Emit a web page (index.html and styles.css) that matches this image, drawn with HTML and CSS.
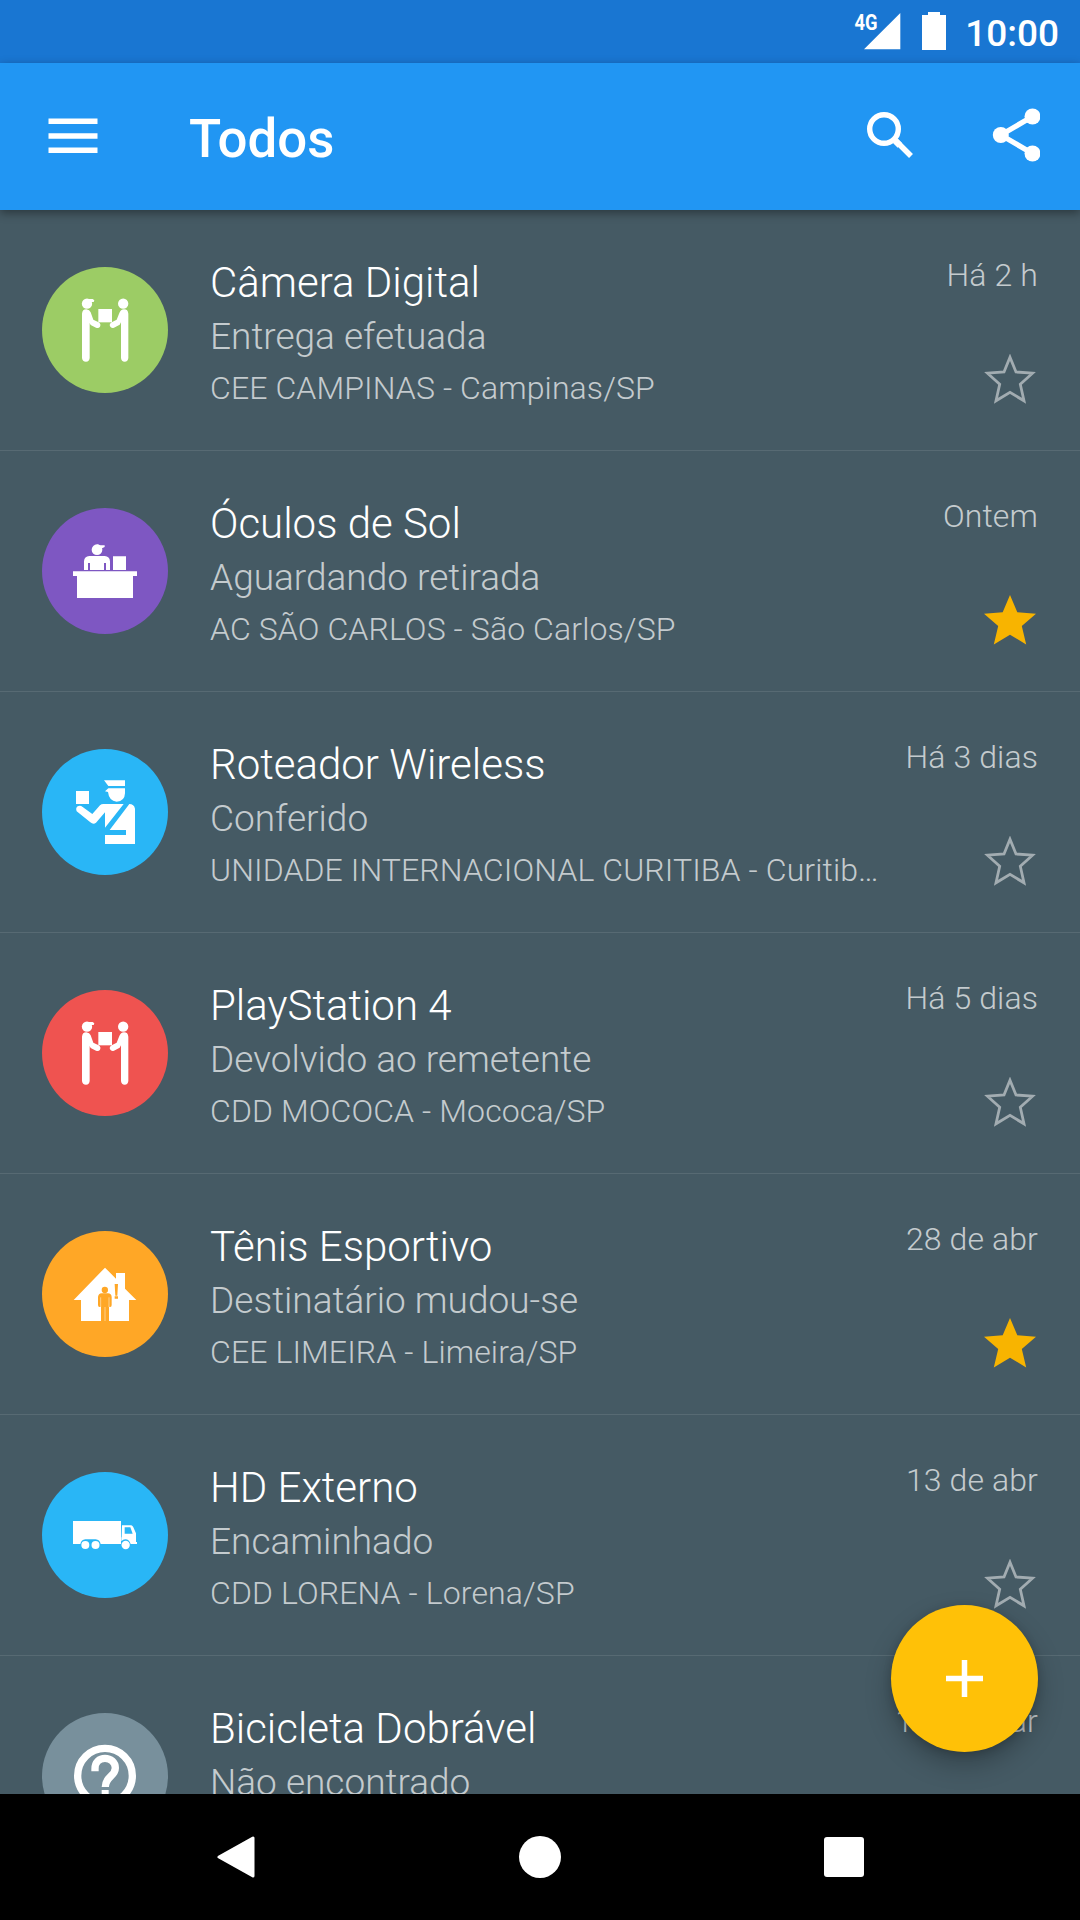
FILE: index.html
```html
<!DOCTYPE html>
<html lang="pt-BR">
<head>
<meta charset="utf-8">
<title>Todos</title>
<link rel="stylesheet" href="styles.css">
</head>
<body>
<svg class="defs" aria-hidden="true">
  <defs>
    <symbol id="handover" viewBox="36 51 378 378">
      <circle cx="171" cy="161" r="15.5"/>
      <path d="M171 147h17l5 4-2 5h-8z"/>
      <rect x="205" y="177" width="41" height="40"/>
      <circle cx="279.500" cy="161" r="15.500"/>
      <path d="M156 191Q157 178 169 178Q179 179 182 187L190 209L206 217Q214 222 210 230Q206 236 198 233L182 225L179 219V324Q178 335 168 335Q157 335 156 324Z"/>
      <path d="M295 191Q294 178 282 178Q272 179 268 189L260 209L245 217Q237 222 240 229Q244 236 252 233L269 224L273 217V324Q274 335 284 335Q294 335 295 324Z"/>
    </symbol>
    <symbol id="counter" viewBox="36 54 378 378">
      <circle cx="201" cy="179" r="16"/>
      <path d="M201 163L210 166H224V171L216 175L214 180Z"/>
      <path d="M162 240V214Q163 199 178 198H224Q239 199 240 214V240H228V219H222V240H180V219H174V240Z"/>
      <path d="M249 199H288V240H249ZM129 244H321V258H309V324H141V258H129Z"/>
    </symbol>
    <symbol id="officer" viewBox="36 57 378 378">
      <path d="M222 151H285V168H235ZM225 184L235 175H285V190Q284 214 260 215Q237 213 234 186ZM138 183H177V222H138Z"/>
      <path d="M140 244Q136 234 143 229Q151 225 158 231L187 252L210 226Q214 222 220 222H281L225 293V247L198 278Q190 285 181 277Z"/>
      <path d="M298 222Q312 222 315 236V342H225V315H288V300H239Z"/>
    </symbol>
    <symbol id="house" viewBox="36 63 378 378">
      <path d="M225 173L258 206V189H285V236L319 270H297V333H237V290Q245 293 245 285V261Q244 250 234 250H215Q205 251 204 261V285Q204 293 213 290V333H153V270H131Z"/>
      <circle class="house-cut" cx="224.500" cy="240" r="9.500"/>
      <path class="house-cut" d="M254 222H264L262 257H256ZM254 259H264V266H254Z"/>
      <path class="house-line" d="M212 262V291M237 262V291M225 291V333"/>
    </symbol>
    <symbol id="truck" viewBox="36 66 378 378">
      <path d="M129 213H273V282H212Q209 269 197 268H166Q154 269 151 282H129Z"/>
      <path fill-rule="evenodd" d="M276 226H304Q308 227 310 232L318 250V276H321V282H302Q298 268 286 268Q279 268 274 274V262H275ZM284 232V251H308L301 232Z"/>
      <circle cx="166" cy="285" r="12"/><circle cx="196.500" cy="285" r="12"/><circle cx="287" cy="285" r="12.500"/>
    </symbol>
    <symbol id="question" viewBox="36 69 378 378">
      <circle class="ring" cx="225" cy="257" r="82"/>
      <path class="ring" d="M195 244V236C195 216 208 205 225 205S256 217 256 234C256 260 226 258 226 291"/>
      <path d="M215 300H236V322H215Z"/>
    </symbol>
    <symbol id="star" viewBox="0 0 52 50">
      <path d="M26 0L33.300 17.300L52 18.700L37.800 31L42.200 49.500L26 39.700L9.800 49.500L14.200 31L0 18.700L18.700 17.300Z"/>
    </symbol>
    <symbol id="star-outline" viewBox="0 0 52 50">
      <path class="outline" d="M26 3.200L32 18L48.500 19.200L36.300 30.200L40 46.800L26 38.400L12 46.800L15.700 30.200L3.500 19.200L20 18Z"/>
    </symbol>
  </defs>
</svg>

<div class="screen">
  <header class="status">
    <svg class="signal" width="47" height="40" viewBox="854 11 47 40">
      <text class="network" x="854.500" y="29.500" textLength="23" lengthAdjust="spacingAndGlyphs">4G</text>
      <path d="M900.300 13V49.300H864Z"/>
    </svg>
    <svg class="battery" width="24" height="38" viewBox="0 0 24 38"><path d="M6 0H18V3H24V38H0V3H6Z"/></svg>
    <span class="clock">10:00</span>
  </header>

  <div class="appbar">
    <svg class="menu" width="50" height="36" viewBox="0 0 50 36"><path d="M.5 .5H49.500V6H.5ZM.5 15.200H49.500V20.700H.5ZM.5 29.500H49.500V35H.5Z"/></svg>
    <h1 class="heading">Todos</h1>
    <svg class="search" width="48" height="48" viewBox="866 111 48 48"><circle cx="884" cy="129" r="14.300"/><path d="M894.500 139.500L911 156"/><path class="joint" d="M895.500 141L900 145.500"/></svg>
    <svg class="share" width="48" height="54" viewBox="992 108.500 48 54"><path d="M1032.500 117L1000.800 135.500L1032.500 154"/><circle cx="1032.500" cy="117" r="8"/><circle cx="1000.800" cy="135.500" r="8"/><circle cx="1032.500" cy="154" r="8"/></svg>
  </div>

  <main class="list">
    <article class="row">
      <div class="avatar green"><svg><use href="#handover"/></svg></div>
      <div class="info"><h2>Câmera Digital</h2><p class="state">Entrega efetuada</p><p class="place">CEE CAMPINAS - Campinas/SP</p></div>
      <div class="side"><time>Há 2 h</time><svg class="star"><use href="#star-outline"/></svg></div>
    </article>
    <article class="row">
      <div class="avatar purple"><svg><use href="#counter"/></svg></div>
      <div class="info"><h2>Óculos de Sol</h2><p class="state">Aguardando retirada</p><p class="place">AC SÃO CARLOS - São Carlos/SP</p></div>
      <div class="side"><time>Ontem</time><svg class="star"><use href="#star"/></svg></div>
    </article>
    <article class="row">
      <div class="avatar blue"><svg><use href="#officer"/></svg></div>
      <div class="info"><h2>Roteador Wireless</h2><p class="state">Conferido</p><p class="place">UNIDADE INTERNACIONAL CURITIBA - Curitib…</p></div>
      <div class="side"><time>Há 3 dias</time><svg class="star"><use href="#star-outline"/></svg></div>
    </article>
    <article class="row">
      <div class="avatar red"><svg><use href="#handover"/></svg></div>
      <div class="info"><h2>PlayStation 4</h2><p class="state">Devolvido ao remetente</p><p class="place">CDD MOCOCA - Mococa/SP</p></div>
      <div class="side"><time>Há 5 dias</time><svg class="star"><use href="#star-outline"/></svg></div>
    </article>
    <article class="row">
      <div class="avatar orange"><svg><use href="#house"/></svg></div>
      <div class="info"><h2>Tênis Esportivo</h2><p class="state">Destinatário mudou-se</p><p class="place">CEE LIMEIRA - Limeira/SP</p></div>
      <div class="side"><time>28 de abr</time><svg class="star"><use href="#star"/></svg></div>
    </article>
    <article class="row">
      <div class="avatar blue"><svg><use href="#truck"/></svg></div>
      <div class="info"><h2>HD Externo</h2><p class="state">Encaminhado</p><p class="place">CDD LORENA - Lorena/SP</p></div>
      <div class="side"><time>13 de abr</time><svg class="star"><use href="#star-outline"/></svg></div>
    </article>
    <article class="row">
      <div class="avatar grey"><svg><use href="#question"/></svg></div>
      <div class="info"><h2>Bicicleta Dobrável</h2><p class="state">Não encontrado</p></div>
      <div class="side"><time>18 de mar</time></div>
    </article>
    <button class="fab" aria-label="Adicionar"><svg width="37" height="37" viewBox="0 0 37 37"><path d="M18.500 0V37M0 18.500H37"/></svg></button>
  </main>

  <nav class="navbar">
    <svg width="38" height="42" viewBox="0 0 38 42"><path class="back" d="M2 21L36 2V40Z"/></svg>
    <svg width="42" height="42" viewBox="0 0 42 42"><circle cx="21" cy="21" r="21"/></svg>
    <svg width="40" height="40" viewBox="0 0 40 40"><rect width="40" height="40" rx="3"/></svg>
  </nav>
</div>
</body>
</html>
```

FILE: styles.css
```css
* { box-sizing: border-box; margin: 0; padding: 0; }
body { width: 1080px; height: 1920px; overflow: hidden; font-family: Roboto, "Liberation Sans", sans-serif; background: #000; }
svg { display: block; fill: #fff; flex: none; }
.defs { position: absolute; width: 0; height: 0; }
.screen { display: flex; flex-direction: column; width: 1080px; height: 1920px; color: #fff; }

.status { display: flex; align-items: flex-start; height: 63px; padding: 11px 21px 0 854px; background: #1976d2; }
.network { font-size: 22px; font-weight: 700; }
.battery { margin: 1px 0 0 21px; }
.clock { margin-left: auto; font-size: 37px; font-weight: 500; line-height: 46px; }

.appbar { display: flex; align-items: center; height: 147px; padding: 0 40px 4px 48px; background: #2196f3; box-shadow: 0 3px 9px rgba(0, 0, 0, .38); z-index: 2; }
.menu { margin-top: 2px; }
.heading { margin: 8px auto 0 91px; font-size: 52.800px; font-weight: 500; line-height: 62px; }
.search { margin-right: 78px; fill: none; stroke: #fff; stroke-width: 5.400; }
.joint { stroke-width: 6.500; }
.share path { fill: none; stroke: #fff; stroke-width: 5.200; }

.list { position: relative; flex: 1; min-height: 0; overflow: hidden; background: #455a64; }
.row { display: flex; height: 241px; padding: 48px 42px 0; border-bottom: 1px solid rgba(255, 255, 255, .1); }
.avatar { flex: none; width: 126px; height: 126px; margin: 9px 42px 0 0; border-radius: 50%; background: var(--tint); }
.avatar svg { width: 126px; height: 126px; }
.green { --tint: #9ccc65; }
.purple { --tint: #7e57c2; }
.blue { --tint: #29b6f6; }
.red { --tint: #ef5350; }
.orange { --tint: #ffa726; }
.grey { --tint: #78909c; }
.house-cut { fill: #ffa726; }
.house-line { fill: none; stroke: #fff; stroke-opacity: .7; stroke-width: 2; }
.ring { fill: none; stroke: #fff; stroke-width: 22; }

.info { flex: 1; min-width: 0; font-weight: 300; }
.info h2, .info p { white-space: nowrap; font-weight: 300; }
.info h2 { font-size: 42px; line-height: 50px; }
.state { font-size: 37px; line-height: 58px; color: rgba(255, 255, 255, .7); }
.place { font-size: 32px; line-height: 44px; letter-spacing: .110px; color: rgba(255, 255, 255, .7); }
.side { display: flex; flex-direction: column; align-items: flex-end; gap: 62px; width: 153px; }
.side time { font-size: 32px; font-weight: 300; line-height: 34px; letter-spacing: .110px; white-space: nowrap; color: rgba(255, 255, 255, .7); }
.star { width: 52px; height: 50px; margin: 0 2px 0 0; fill: #f8b400; }
.outline { fill: none; stroke: #a2acb1; stroke-width: 2.800; }

.fab { position: absolute; right: 42px; bottom: 42px; display: grid; place-items: center; width: 147px; height: 147px; border: 0; border-radius: 50%; background: #ffc107; box-shadow: 0 12px 26px rgba(0, 0, 0, .26), 0 2px 8px rgba(0, 0, 0, .16); }
.fab path { stroke: #fff; stroke-width: 5.500; }

.navbar { display: flex; align-items: center; height: 126px; padding: 0 216px 0 217px; justify-content: space-between; background: #000; }
.back { stroke: #fff; stroke-width: 3; stroke-linejoin: round; }
```
